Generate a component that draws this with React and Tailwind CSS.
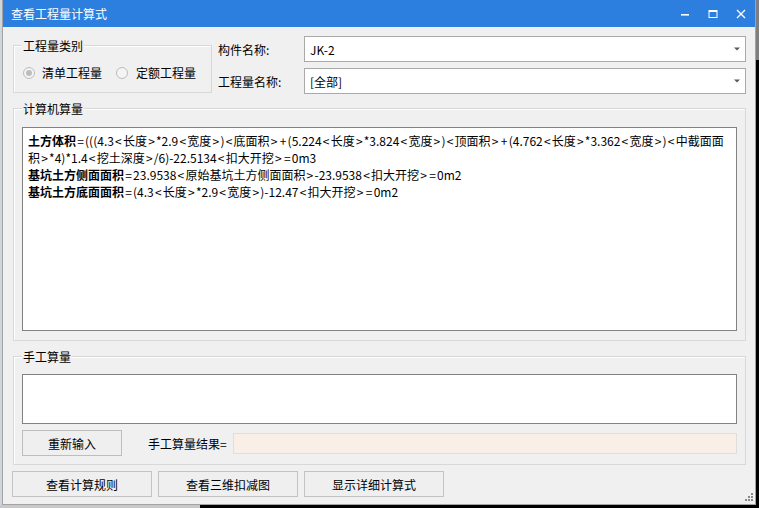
import React from "react";

function Radio({ checked }) {
  return (
    <div className="w-[12px] h-[12px] rounded-full border border-[#bcbcbc] bg-[#f4f4f4] flex items-center justify-center">
      {checked && <div className="w-[6px] h-[6px] rounded-full bg-[#bdbdbd]" />}
    </div>
  );
}

function Combo({ value }) {
  return (
    <div className="flex-1 h-full border border-[#a9a9a9] bg-white flex items-center justify-between pl-[5px] pr-[5px]">
      <span className="text-[12px] leading-[17px] text-black">{value}</span>
      <svg width="6" height="4" viewBox="0 0 6 4">
        <path d="M0 0.5 H6 L3 3.5 Z" fill="#5a5a5a" />
      </svg>
    </div>
  );
}

function GroupLabel({ children }) {
  return (
    <span className="absolute left-[8px] -top-[9px] px-[1px] bg-[#f0f0f0] text-[12px] leading-[17px] text-black">
      {children}
    </span>
  );
}

function Formula({ text }) {
  const parts = text.split(/([<>=+])/);
  return (
    <>
      {parts.map((p, i) =>
        /^[<>=+]$/.test(p) ? (
          <span key={i} className="px-[1.2px]">
            {p}
          </span>
        ) : (
          <React.Fragment key={i}>{p}</React.Fragment>
        )
      )}
    </>
  );
}

export default function App() {
  return (
    <div className="w-[759px] h-[508px] overflow-hidden bg-black flex flex-col font-['Noto_Sans_CJK_SC',sans-serif] text-[12px] leading-[17px] text-black">
      <div className="flex h-[505px]">
        <div className="w-[2px] h-full bg-[#cfd5dd]" />
        <div className="relative w-[754px] h-[505px] bg-[#f0f0f0] border-l border-r border-b border-[#a3a3a3] flex flex-col">
          {/* title bar */}
          <div className="h-[27px] bg-[#2c7fdf] flex items-center justify-between">
            <span className="pl-[8px] text-white text-[12px]">查看工程量计算式</span>
            <div className="flex h-full">
              <div className="w-[28px] h-full flex items-center justify-center">
                <svg width="10" height="10" viewBox="0 0 10 10">
                  <rect x="1" y="5" width="8" height="1.6" fill="#fff" />
                </svg>
              </div>
              <div className="w-[28px] h-full flex items-center justify-center">
                <svg width="10" height="10" viewBox="0 0 10 10">
                  <rect x="1" y="1.5" width="8" height="7" fill="none" stroke="#fff" strokeWidth="1" />
                  <rect x="1" y="1" width="8" height="2" fill="#fff" />
                </svg>
              </div>
              <div className="w-[28px] h-full flex items-center justify-center">
                <svg width="10" height="10" viewBox="0 0 10 10">
                  <path d="M1 1 L9 9 M9 1 L1 9" stroke="#fff" strokeWidth="1.3" />
                </svg>
              </div>
            </div>
          </div>

          {/* body */}
          <div className="flex flex-col pl-[10px] pr-[9px]">
            {/* top row */}
            <div className="flex h-[81px]">
              <div className="relative mt-[18px] w-[199px] h-[48px] border border-[#d8d8d8] shadow-[inset_1px_1px_0_#ffffff]">
                <GroupLabel>工程量类别</GroupLabel>
                <div className="flex items-center pt-[18px] pl-[9px]">
                  <Radio checked />
                  <span className="ml-[7px]">清单工程量</span>
                  <div className="ml-[14px]">
                    <Radio />
                  </div>
                  <span className="ml-[8px]">定额工程量</span>
                </div>
              </div>
              <div className="ml-[6px] flex-1 flex flex-col pt-[9px] gap-[6px]">
                <div className="flex items-center h-[26px]">
                  <span className="w-[86px]">构件名称:</span>
                  <Combo value="JK-2" />
                </div>
                <div className="flex items-center h-[26px]">
                  <span className="w-[86px]">工程量名称:</span>
                  <Combo value="[全部]" />
                </div>
              </div>
            </div>

            {/* 计算机算量 */}
            <div className="relative h-[233px] border border-[#d8d8d8] shadow-[inset_1px_1px_0_#ffffff] pt-[18px] px-[8px]">
              <GroupLabel>计算机算量</GroupLabel>
              <div className="h-[204px] border border-[#828282] bg-white pl-[5px] pt-[4px] overflow-hidden whitespace-nowrap">
                <div>
                  <b className="font-bold">土方体积</b>
                  <Formula text="=(((4.3<长度>*2.9<宽度>)<底面积>+(5.224<长度>*3.824<宽度>)<顶面积>+(4.762<长度>*3.362<宽度>)<中截面面" />
                </div>
                <div>
                  <Formula text="积>*4)*1.4<挖土深度>/6)-22.5134<扣大开挖>=0m3" />
                </div>
                <div>
                  <b className="font-bold">基坑土方侧面面积</b>
                  <Formula text="=23.9538<原始基坑土方侧面面积>-23.9538<扣大开挖>=0m2" />
                </div>
                <div>
                  <b className="font-bold">基坑土方底面面积</b>
                  <Formula text="=(4.3<长度>*2.9<宽度>)-12.47<扣大开挖>=0m2" />
                </div>
              </div>
            </div>

            {/* 手工算量 */}
            <div className="relative mt-[15px] h-[109px] border border-[#d8d8d8] shadow-[inset_1px_1px_0_#ffffff] pt-[17px] px-[8px]">
              <GroupLabel>手工算量</GroupLabel>
              <div className="h-[50px] border border-[#828282] bg-white" />
              <div className="mt-[6px] flex items-center h-[26px]">
                <div className="w-[100px] h-[26px] border border-[#bdbdbd] bg-[#efefef] flex items-center justify-center">
                  重新输入
                </div>
                <span className="ml-[26px]">手工算量结果=</span>
                <div className="ml-[6px] flex-1 h-[21px] bg-[#faefe6] border border-[#e2ddd8]" />
              </div>
            </div>

            {/* bottom buttons */}
            <div className="mt-[6px] -ml-[1px] flex gap-[6px]">
              <div className="w-[140px] h-[26px] border border-[#c3c3c3] bg-[#efefef] flex items-center justify-center">
                查看计算规则
              </div>
              <div className="w-[140px] h-[26px] border border-[#c3c3c3] bg-[#efefef] flex items-center justify-center">
                查看三维扣减图
              </div>
              <div className="w-[140px] h-[26px] border border-[#c3c3c3] bg-[#efefef] flex items-center justify-center">
                显示详细计算式
              </div>
            </div>
          </div>

          {/* resize grip */}
          <svg className="absolute right-[2px] bottom-[3px]" width="8" height="8" viewBox="0 0 8 8">
            <rect x="6" y="0" width="2" height="2" fill="#8a8a8a" />
            <rect x="3" y="3" width="2" height="2" fill="#8a8a8a" />
            <rect x="6" y="3" width="2" height="2" fill="#8a8a8a" />
            <rect x="0" y="6" width="2" height="2" fill="#8a8a8a" />
            <rect x="3" y="6" width="2" height="2" fill="#8a8a8a" />
            <rect x="6" y="6" width="2" height="2" fill="#8a8a8a" />
          </svg>
        </div>
        <div className="flex-1 flex flex-col">
          <div className="h-[60px] bg-[#7f7f7f]" />
          <div className="flex-1 bg-black" />
        </div>
      </div>
      <div className="h-[3px] flex">
        <div className="w-[200px] bg-[#c9c9c9]" />
        <div className="flex-1 bg-black" />
      </div>
    </div>
  );
}
